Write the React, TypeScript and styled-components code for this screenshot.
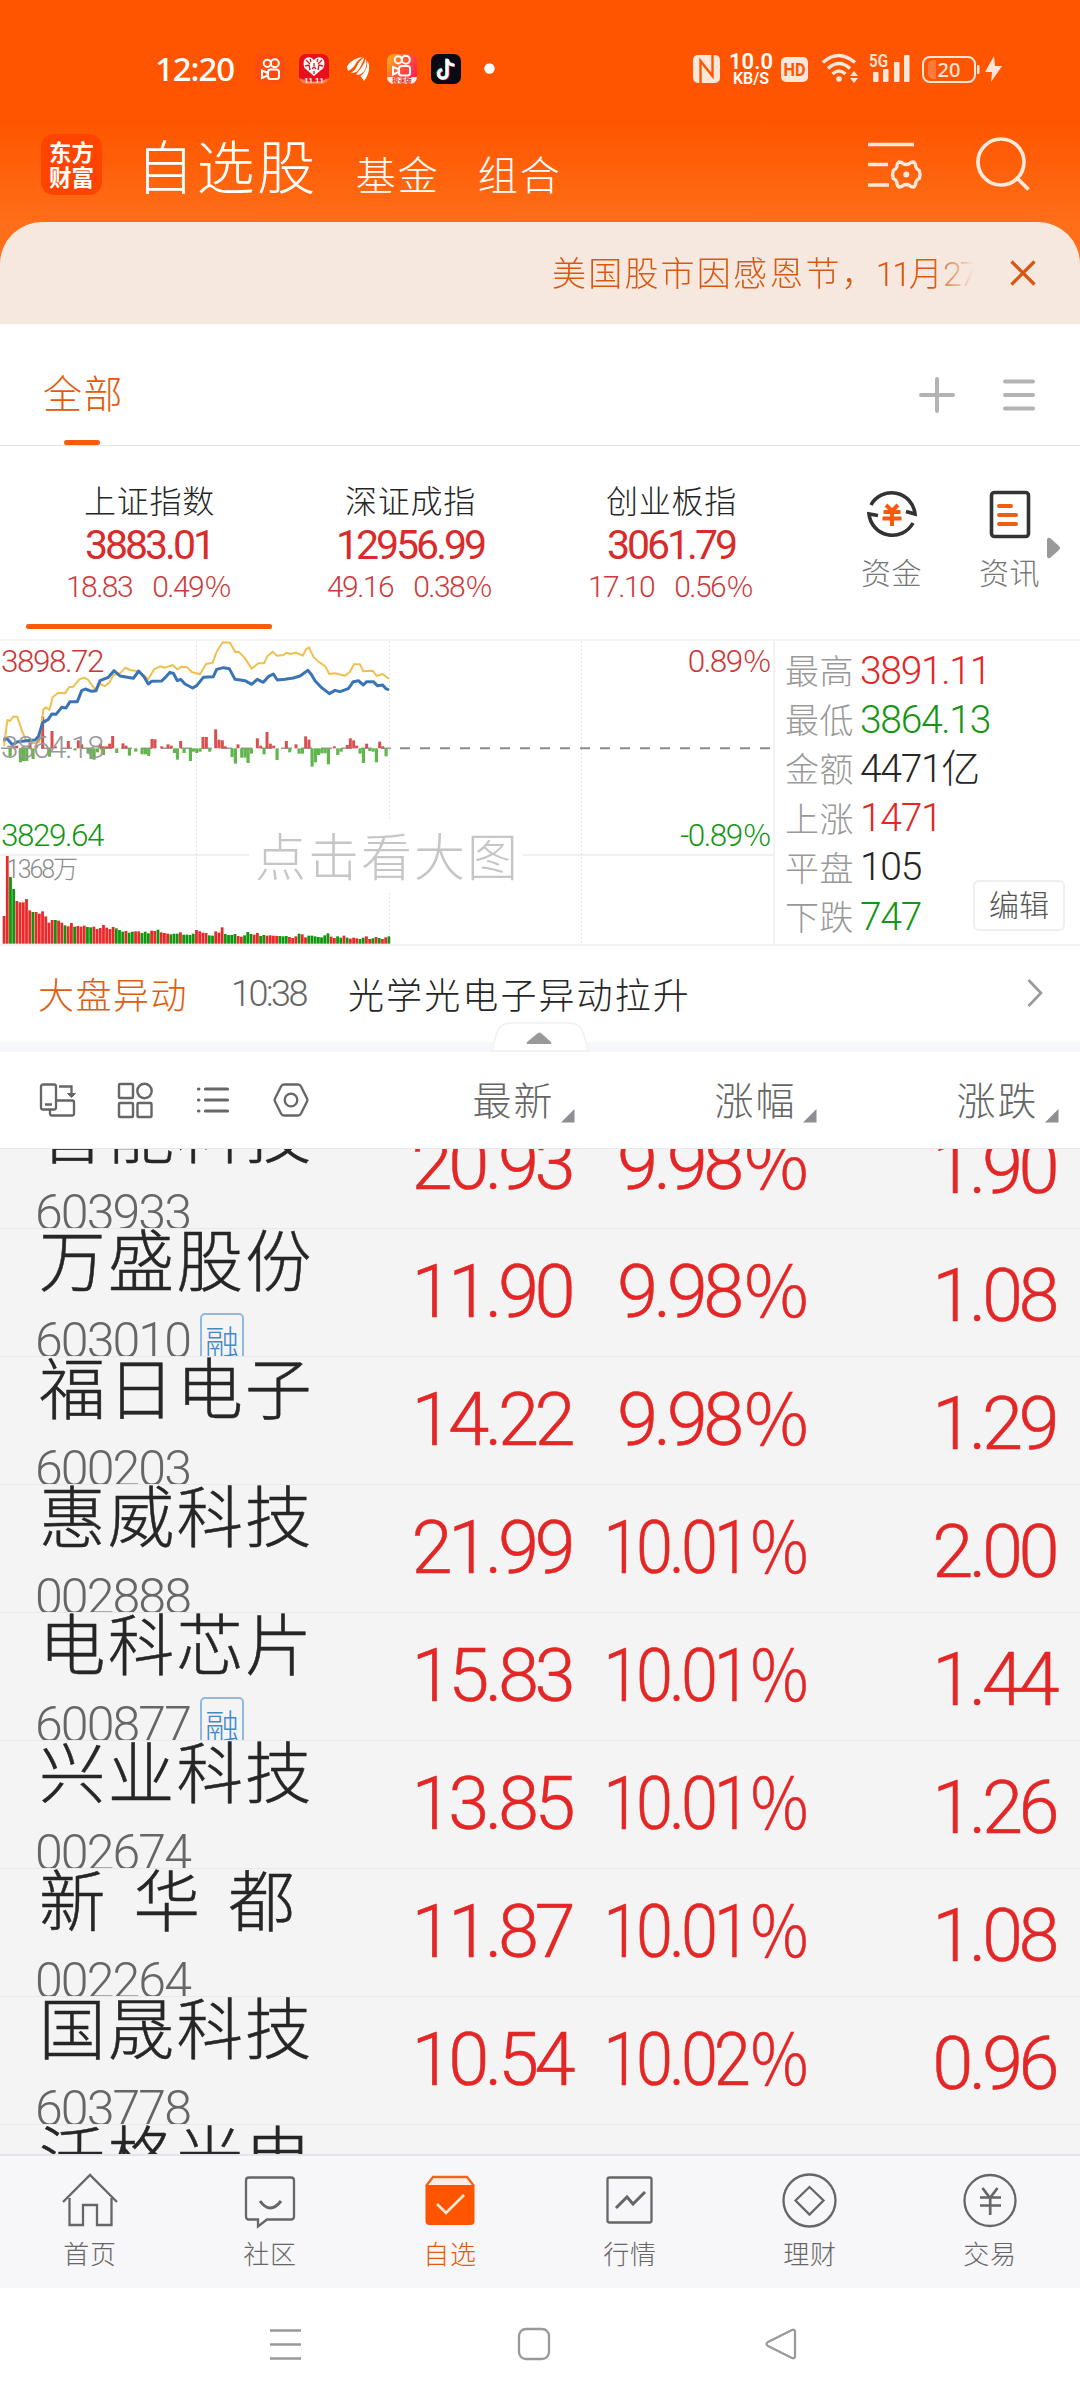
import React from "react";
import styled, { createGlobalStyle, css } from "styled-components";

const RED = "#e32626";
const GREEN = "#159515";
const INK = "#262626";

const GlobalStyle = createGlobalStyle`
  * { box-sizing: border-box; }
  html, body { margin: 0; padding: 0; background: #fff; }
  body { width: 1080px; height: 2400px; overflow: hidden; }
`;

const Screen = styled.div`
  width: 1080px;
  height: 2400px;
  display: flex;
  flex-direction: column;
  overflow: hidden;
  background: #fff;
  font-family: Roboto, "Noto Sans CJK SC", sans-serif;
  font-weight: 300;
  color: ${INK};
  white-space: nowrap;
  svg { display: block; flex: none; overflow: visible; }
`;

/* ---------- top area ---------- */

const Top = styled.header`
  height: 324px;
  flex: none;
  display: flex;
  flex-direction: column;
  background: linear-gradient(180deg, #ff5500 0, #ff5500 122px, #ff6e18 222px, #ff6e18 100%);
`;

const StatusBar = styled.div`
  height: 134px;
  padding: 52px 76px 48px 155px;
  display: flex;
  justify-content: space-between;
  color: #fff;
`;

const StatusGroup = styled.div`
  display: flex;
  align-items: center;
  height: 34px;
`;

const Clock = styled.span`
  width: 100px;
  font: 500 33px/34px "Noto Sans", sans-serif;
  letter-spacing: -1.1px;
`;

const AppBadge = styled.span<{ $bg: string }>`
  width: 30px;
  height: 30px;
  margin-right: 14px;
  border-radius: 7px;
  overflow: hidden;
  background: ${(p) => p.$bg};
`;

const Speed = styled.span`
  width: 40px;
  margin: 0 10px 0 10px;
  display: flex;
  flex-direction: column;
  align-items: center;
  font: 600 22px/18px Roboto, sans-serif;
  small { font: 600 16px/15px Roboto, sans-serif; }
`;

const TitleBar = styled.div`
  height: 88px;
  padding: 0 49px 0 41px;
  display: flex;
  align-items: flex-start;
  color: #fff;
`;

const Logo = styled.div`
  width: 61px;
  height: 61px;
  padding: 5px 0 0 8px;
  border-radius: 13px;
  background: #ff4400;
  font: 700 22.5px/25px "Noto Sans CJK SC", sans-serif;
`;

const HeadTab = styled.span<{ $size: number; $gap: number; $ml: number; $spacing: number }>`
  margin: ${(p) => p.$gap}px 0 0 ${(p) => p.$ml}px;
  font-size: ${(p) => p.$size}px;
  line-height: 60px;
  letter-spacing: ${(p) => p.$spacing}px;
`;

const HeadIcons = styled.div`
  margin: 6px 0 0 auto;
  display: flex;
  gap: 53px;
`;

const Notice = styled.div`
  height: 102px;
  padding: 0 44px 0 552px;
  display: flex;
  align-items: center;
  justify-content: space-between;
  border-radius: 42px 42px 0 0;
  background: #f6e7df;
`;

const NoticeText = styled.div`
  width: 424px;
  padding-top: 2px;
  overflow: hidden;
  font-size: 34px;
  line-height: 60px;
  letter-spacing: 2.2px;
  color: #d9580f;
  mask-image: linear-gradient(90deg, #000 380px, transparent 422px);
`;

const NoticeNumber = styled.span`
  letter-spacing: -2.4px;
  margin-left: -2px;
`;

/* ---------- group tabs ---------- */

const GroupBar = styled.div`
  height: 122px;
  flex: none;
  padding: 0 43px 0 43px;
  display: flex;
  align-items: stretch;
  justify-content: space-between;
  border-bottom: 1px solid #e3e3e3;
`;

const GroupTab = styled.div`
  display: flex;
  flex-direction: column;
  align-items: center;
  justify-content: flex-end;
  font-size: 39px;
  line-height: 60px;
  letter-spacing: 1.5px;
  color: #e55a0a;
  &::after {
    content: "";
    width: 36px;
    height: 5px;
    margin: 15px 3px 0 0;
    border-radius: 3px;
    background: #fb5a0c;
  }
`;

const GroupTools = styled.div`
  display: flex;
  align-items: center;
  gap: 46px;
  padding-top: 20px;
`;

/* ---------- indices ---------- */

const IndexBar = styled.section`
  height: 195px;
  flex: none;
  padding-left: 19px;
  display: flex;
  border-bottom: 2px solid #f4f4f4;
`;

const IndexCell = styled.div<{ $active?: boolean }>`
  width: 261px;
  padding-top: 36px;
  display: flex;
  flex-direction: column;
  align-items: center;
  &::after {
    content: "";
    width: 246px;
    height: 5px;
    margin: 19px 2px 0 0;
    align-self: center;
    border-radius: 3px;
    background: ${(p) => (p.$active ? "#fb5a0c" : "transparent")};
  }
`;

const IndexName = styled.div`
  font-size: 32px;
  line-height: 40px;
  letter-spacing: 0.8px;
`;

const IndexValue = styled.div`
  margin-right: 1px;
  font-size: 41px;
  font-weight: 400;
  line-height: 46px;
  letter-spacing: -3px;
  color: #da2b2b;
`;

const IndexDelta = styled.div`
  margin-right: 2px;
  display: flex;
  gap: 20px;
  font-size: 30px;
  line-height: 37px;
  letter-spacing: -1.5px;
  color: #cc3b3b;
`;

/* The percent sign is drawn wider than the tightly set digits beside it. */
const Percent = styled.span`
  margin-left: 0.06em;
  font-family: "Noto Sans CJK SC", sans-serif;
  font-size: 0.97em;
  line-height: 0;
  letter-spacing: 0;
`;

const Shortcuts = styled.div`
  margin-left: 59px;
  padding-top: 41px;
  display: flex;
  gap: 57px;
`;

const Shortcut = styled.div`
  width: 61px;
  display: flex;
  flex-direction: column;
  align-items: center;
  font-size: 30px;
  line-height: 40px;
  letter-spacing: 0.6px;
  color: #777;
  svg { margin-bottom: 13px; }
`;

const MoreArrow = styled.div`
  margin: 91px 0 0 7px;
`;

/* ---------- chart ---------- */

const Market = styled.section`
  position: relative;
  height: 305px;
  flex: none;
  display: flex;
  border-bottom: 2px solid #f2f2f2;
`;

const ChartBox = styled.div`
  position: relative;
  width: 775px;
  border-right: 2px solid #f2f2f2;
`;

const ChartLabel = styled.span<{ $top: number; $right?: boolean; $color: string }>`
  position: absolute;
  top: ${(p) => p.$top}px;
  ${(p) => (p.$right ? css`right: 2px;` : css`left: 1px;`)}
  font-size: 31.5px;
  line-height: 34px;
  letter-spacing: -1.5px;
  color: ${(p) => p.$color};
`;

const VolumeLabel = styled.span`
  position: absolute;
  left: 6px;
  top: 212px;
  font-size: 25px;
  line-height: 34px;
  letter-spacing: -2.1px;
  color: #8c8c8c;
`;

const Watermark = styled.div`
  position: absolute;
  left: 249px;
  top: 180px;
  width: 274px;
  height: 70px;
  padding-left: 6px;
  background: #fff;
  font-size: 51px;
  line-height: 76px;
  letter-spacing: 2px;
  color: #c6c6c6;
`;

const StatList = styled.div`
  flex: 1;
  padding: 5px 0 0 10px;
`;

const Stat = styled.div<{ $color: string }>`
  height: 49.2px;
  display: flex;
  align-items: center;
  gap: 6px;
  font-size: 34px;
  letter-spacing: 0.5px;
  color: #999;
  span { padding-bottom: 2px; }
  b {
    font-weight: 300;
    font-size: 39px;
    line-height: 46px;
    letter-spacing: -1.3px;
    color: ${(p) => p.$color};
  }
`;

const EditButton = styled.button`
  position: absolute;
  left: 973px;
  top: 239px;
  width: 92px;
  height: 51px;
  padding: 0;
  border: 2px solid #efefef;
  border-radius: 6px;
  background: #fff;
  font: 300 30px/48px Roboto, "Noto Sans CJK SC", sans-serif;
  color: #555;
`;

/* ---------- news ---------- */

const NewsRow = styled.div`
  position: relative;
  height: 106px;
  flex: none;
  padding: 1px 37px 4px 38px;
  display: flex;
  align-items: center;
  border-bottom: 10px solid #f5f7fa;
`;

const NewsTag = styled.span`
  width: 193px;
  font-size: 36px;
  letter-spacing: 1.5px;
  color: #e05d10;
`;

const NewsTime = styled.span`
  width: 117px;
  padding-top: 2px;
  font-size: 36px;
  line-height: 40px;
  letter-spacing: -2.5px;
  color: #666;
`;

const NewsTitle = styled.span`
  flex: 1;
  font-size: 36px;
  letter-spacing: 2.1px;
`;

const Collapse = styled.div`
  position: absolute;
  left: 491px;
  top: 76px;
`;

/* ---------- table ---------- */

const TableHead = styled.div`
  height: 97px;
  flex: none;
  display: grid;
  grid-template-columns: 340px 234.5px 242px 242px;
  align-items: center;
  border-bottom: 1px solid #e8e8e8;
  background: #fff;
`;

const ViewIcons = styled.div`
  padding-left: 39px;
  display: flex;
  gap: 42px;
`;

const SortHead = styled.div`
  padding-top: 4px;
  display: flex;
  justify-content: flex-end;
  align-items: center;
  gap: 6px;
  font-size: 39px;
  line-height: 60px;
  letter-spacing: 2px;
  color: #666;
  svg { margin-top: 28px; }
`;

const TableBody = styled.main`
  height: 1005px;
  flex: none;
  overflow: hidden;
  background: #f4f4f4;
`;

const StockRow = styled.div`
  height: 128px;
  display: grid;
  grid-template-columns: 340px 231px 237.5px 246.5px;
  overflow: hidden;
  border-bottom: 1px solid #e9e9e9;
  &:first-child { margin-top: -48px; }
`;

const StockName = styled.div`
  height: 73px;
  padding-left: 39px;
  margin-top: -2px;
  font-size: 66.5px;
  line-height: 73px;
  letter-spacing: 2.2px;
  word-spacing: 7.5px;
  white-space: pre;
  -webkit-text-stroke: 0.5px currentColor;
`;

const CodeLine = styled.div`
  padding: 13px 0 0 35px;
  display: flex;
  font-size: 50px;
  line-height: 57px;
  letter-spacing: -1.9px;
  color: #666;
`;

const MarginTag = styled.span`
  width: 44px;
  height: 58px;
  margin: 0 0 0 10px;
  border: 2px solid #8fb8e2;
  border-radius: 5px;
  font-size: 34px;
  line-height: 56px;
  letter-spacing: 0;
  text-align: center;
  color: #4388cf;
`;

const Num = styled.div<{ $drop?: boolean; $narrow?: boolean }>`
  padding-top: ${(p) => (p.$drop ? 22 : 18)}px;
  font-size: 74px;
  line-height: 90px;
  letter-spacing: -4.5px;
  text-align: right;
  color: ${RED};
  -webkit-text-stroke: 0.5px currentColor;
  transform: scaleX(${(p) => (p.$narrow ? 0.9 : 1)});
  transform-origin: right;
`;

/* ---------- bottom ---------- */

const TabBar = styled.nav`
  height: 134px;
  flex: none;
  display: grid;
  grid-template-columns: repeat(6, 180px);
  border-top: 2px solid #e4e4e6;
  background: #f7f7fa;
`;

const Tab = styled.div<{ $active?: boolean }>`
  padding-top: 15px;
  display: flex;
  flex-direction: column;
  align-items: center;
  font-size: 26px;
  line-height: 36px;
  letter-spacing: 0.8px;
  color: ${(p) => (p.$active ? "#e55a0a" : "#666")};
  svg { margin-bottom: 6px; }
`;

const SystemNav = styled.div`
  height: 112px;
  padding: 0 282px 0 268px;
  display: flex;
  align-items: center;
  justify-content: space-between;
`;

/* ---------- data ---------- */

const indices = [
  { name: "上证指数", value: "3883.01", change: "18.83", pct: "0.49" },
  { name: "深证成指", value: "12956.99", change: "49.16", pct: "0.38" },
  { name: "创业板指", value: "3061.79", change: "17.10", pct: "0.56" },
];

const stats = [
  ["最高", "3891.11", RED],
  ["最低", "3864.13", GREEN],
  ["金额", "4471亿", INK],
  ["上涨", "1471", RED],
  ["平盘", "105", INK],
  ["下跌", "747", GREEN],
];

const stocks = [
  { name: "智能科技", code: "603933", price: "20.93", pct: "9.98", diff: "1.90" },
  { name: "万盛股份", code: "603010", price: "11.90", pct: "9.98", diff: "1.08", margin: true },
  { name: "福日电子", code: "600203", price: "14.22", pct: "9.98", diff: "1.29" },
  { name: "惠威科技", code: "002888", price: "21.99", pct: "10.01", diff: "2.00" },
  { name: "电科芯片", code: "600877", price: "15.83", pct: "10.01", diff: "1.44", margin: true },
  { name: "兴业科技", code: "002674", price: "13.85", pct: "10.01", diff: "1.26" },
  { name: "新 华 都", code: "002264", price: "11.87", pct: "10.01", diff: "1.08" },
  { name: "国晟科技", code: "603778", price: "10.54", pct: "10.02", diff: "0.96" },
  { name: "沃格光电" },
];

const averageLine =
  "12,378 22,300 30,303 40,290 52,290 65,330 78,362 100,370 118,365 130,268 138,262 148,270 158,232 175,218 195,220 207,202 220,200 238,178 253,173 265,180 285,208 300,192 315,198 328,188 340,165 360,160 376,143 390,150 405,152 415,155 430,165 445,178 462,148 480,139 495,143 518,135 532,148 545,140 562,142 575,156 600,163 618,132 638,128 650,95 668,67 690,68 706,97 716,95 735,115 755,146 775,130 792,130 803,107 818,95 830,107 850,105 860,98 870,102 888,98 908,107 918,88 927,82 940,110 955,125 975,138 988,162 1005,160 1035,167 1050,155 1062,133 1080,133 1090,154 1118,152 1130,168 1148,162 1167,177";

const indexLine =
  "10,357 22,357 38,375 50,366 80,362 105,360 115,350 128,308 145,298 155,282 168,283 185,262 198,264 210,245 232,245 245,212 256,207 275,214 288,212 300,182 325,172 342,152 360,168 400,175 416,153 432,170 445,192 455,184 485,183 495,173 510,157 520,160 532,182 542,178 555,192 578,204 590,197 610,172 640,170 650,148 670,143 688,146 705,178 735,182 755,193 772,178 790,187 805,170 820,162 832,180 855,178 880,174 900,168 924,151 935,165 945,182 965,203 988,221 1005,211 1020,215 1045,206 1060,185 1075,182 1090,195 1100,185 1120,185 1132,197 1148,195 1158,206 1167,210";

const volumes = [
  83, 263, 200, 164, 128, 124, 124, 134, 100, 95, 95, 90, 97, 82, 63, 71, 71, 69, 63, 55, 52, 62, 51, 53, 51, 54, 50, 49, 51, 44,
  47, 56, 48, 44, 50, 46, 41, 36, 38, 33, 36, 37, 37, 32, 36, 31, 39, 38, 42, 34, 32, 30, 28, 30, 30, 34, 27, 27, 26, 30,
  41, 37, 33, 32, 25, 24, 37, 33, 49, 29, 26, 26, 29, 23, 21, 25, 35, 29, 27, 32, 23, 26, 24, 25, 24, 23, 23, 22, 23, 20,
  17, 22, 30, 28, 19, 24, 24, 22, 20, 19, 25, 31, 21, 17, 22, 18, 24, 18, 15, 18, 16, 14, 18, 22, 14, 16, 20, 17, 14, 19, 22,
];
const volumeColors =
  "RRGGRRRRRGRRRRRRGRRGRRGRRRGGRRRRRRRGGGRGGRRGGGRRGRRRGGGRGGGGRRRRGGRRRGGGGRRGGGRRGGRRRRGGGRRRGRRGGGGGGGRRGGRGRRRGGRRGRGRRGG";

const buying = [
  [40, 6], [50, 8], [90, 20], [108, 8], [128, 95], [156, 52], [166, 6], [205, 22], [235, 24], [245, 12], [301, 14], [310, 6], [320, 6], [329, 14], [338, 37], [369, 15], [378, 8],
  [456, 28], [465, 27], [485, 6], [504, 12], [514, 8], [542, 22], [609, 34], [619, 34], [647, 57], [657, 26], [667, 24], [676, 6],
  [714, 12], [772, 30], [782, 8], [801, 49], [811, 14], [821, 8], [859, 22], [888, 12], [917, 36], [927, 26], [1003, 6],
  [1042, 10], [1051, 30], [1061, 24], [1070, 8], [1100, 14], [1139, 20], [1148, 6],
];
const selling = [
  [30, 25], [61, 42], [70, 38], [80, 38], [99, 32], [148, 25], [225, 6], [264, 16], [273, 32], [282, 34], [292, 12], [310, 20], [350, 14],
  [388, 22], [407, 10], [426, 18], [436, 18], [446, 23], [523, 14], [532, 34], [552, 14], [571, 38], [580, 10], [590, 14], [600, 10], [629, 10],
  [696, 26], [706, 46], [725, 28], [735, 28], [744, 44], [754, 16], [792, 18], [831, 35], [869, 12], [897, 16], [907, 16], [936, 55], [946, 42],
  [955, 20], [965, 15], [975, 15], [985, 48], [1013, 20], [1023, 10], [1080, 16], [1090, 44], [1109, 8], [1119, 10], [1129, 42], [1158, 24],
];

/* ---------- drawings ---------- */

const Camera = () => (
  <g fill="none" stroke="#fff" strokeWidth="2">
    <circle cx="12.300" cy="9.300" r="3.600" />
    <circle cx="19.800" cy="9.300" r="4" />
    <rect x="13" y="15.500" width="11" height="9.500" rx="2.500" />
    <path d="M7 16.500v7.500l5.500-2.300v-3z" />
  </g>
);

const StatusIcons = () => (
  <>
    <AppBadge $bg="#ff4d0d">
      <svg width="30" height="30"><Camera /></svg>
    </AppBadge>
    <AppBadge $bg="#e8101c">
      <svg width="30" height="30">
        <path d="M0 24q15 7 30 0v6h-30z" fill="#ff7a4a" />
        <path d="M15 22L5.500 14Q3 7 7 4q5-2 8 2 3-4 8-2 4 3 1.500 10z" fill="#fff" />
        <path d="M7 6l4 4M23 6l-4 4M6 12l4-1 1 5M24 12l-4-1-1 5M15 9v3M13 15l2-2 2 2M15 17v3M11 5l1 3M19 5l-1 3" stroke="#e8101c" strokeWidth="1.300" fill="none" />
        <text x="15" y="28.500" textAnchor="middle" fontFamily="Roboto" fontSize="7.500" fontWeight="700" fill="#fff">11.11</text>
      </svg>
    </AppBadge>
    <AppBadge $bg="transparent">
      <svg width="30" height="30" fill="#fff">
        <path d="M4 12.500Q9 4 20 3Q14.500 6 12.500 10T5 17z" />
        <path d="M21 3.200Q15.500 8 13.700 12.500T8 18.500q5 1.500 8.300-4Q19 10 20 7.500T21 3.200z" />
        <path d="M22.800 4.200Q22 9 18.500 13.500T13 20.500q5.500 1 8.500-4T22.800 4.200z" />
        <path d="M24.500 7Q24.500 13 22 17t-4.500 5l3.500 5q4.500-6 5-11.500T24.500 7z" />
      </svg>
    </AppBadge>
    <AppBadge $bg="linear-gradient(120deg,#ffad1f 5%,#ff5a35 45%,#ff1f57 90%)">
      <svg width="30" height="30">
        <g transform="translate(-1,-3.500)"><Camera /></g>
        <path d="M0 23h30v3q-2 4-5 4H5q-4 0-5-4z" fill="#ffece0" />
        <text x="15" y="29.300" textAnchor="middle" fontFamily="Noto Sans CJK SC" fontSize="6.500" fontWeight="700" fill="#e23a1c">极速版</text>
      </svg>
    </AppBadge>
    <AppBadge $bg="#0b0a14">
      <svg width="30" height="30" fill="none" strokeWidth="3">
        <path d="M15.500 4.500v15a4.300 4.300 0 1 1-5-4.200M15.500 5q1 5 7 5.500" stroke="#25f4ee" />
        <path d="M17 5.500v15a4.300 4.300 0 1 1-5-4.200M17 6q1 5 7 5.500" stroke="#fe2c55" />
        <path d="M16.200 5v15a4.300 4.300 0 1 1-5-4.200M16.200 5.500q1 5.500 7.300 5.800" stroke="#fff" />
      </svg>
    </AppBadge>
    <svg width="30" height="30"><circle cx="14.500" cy="14.500" r="5.200" fill="#fff" /></svg>
  </>
);

const StatusRight = () => (
  <StatusGroup>
    <svg width="28" height="30" viewBox="0 0 28 30">
      <rect x="0" y="1" width="27" height="28" rx="5" fill="#ffe6da" />
      <path d="M7.500 29V7l12 15V1" stroke="#ff5500" strokeWidth="2.400" fill="none" />
    </svg>
    <Speed>10.0<small>KB/S</small></Speed>
    <svg width="28" height="26" viewBox="0 0 28 26">
      <rect width="27" height="25" rx="5" y="1" fill="#ffe6da" />
      <text x="13.500" y="20" textAnchor="middle" fontFamily="Roboto" fontSize="18" fontWeight="700" fill="#ff5500" textLength="22" lengthAdjust="spacingAndGlyphs">HD</text>
    </svg>
    <svg width="40" height="34" viewBox="0 0 40 34" style={{ marginLeft: 12 }} fill="none" stroke="#ffe6da" strokeWidth="3.400">
      <path d="M2 10.500q15-14 32 0M7 16.500q11-10 22 0M11.500 22q6.500-6 13 0" />
      <circle cx="18" cy="27" r="2.800" fill="#ffe6da" stroke="none" />
      <path d="M29 24l4-5 4 5zM29 26l4 5 4-5z" fill="#ffe6da" stroke="none" />
    </svg>
    <svg width="42" height="34" viewBox="0 0 42 34" style={{ marginLeft: 8 }} fill="#ffe6da">
      <text x="0" y="15" fontFamily="Roboto" fontSize="18" fontWeight="600" textLength="19" lengthAdjust="spacingAndGlyphs">5G</text>
      <rect x="4" y="20" width="5.500" height="10" rx="1" />
      <rect x="14" y="17" width="5.500" height="13" rx="1" />
      <rect x="25" y="10" width="5.500" height="20" rx="1" />
      <rect x="35" y="3" width="5.500" height="27" rx="1" />
    </svg>
    <svg width="82" height="34" viewBox="0 0 82 34" style={{ marginLeft: 11 }}>
      <rect x="1" y="5" width="52" height="25" rx="7" fill="none" stroke="#ffe6da" strokeWidth="2" />
      <path d="M10 8h4v19h-4q-4-1-4-5v-9q0-4 4-5z" fill="#ff7a3d" />
      <rect x="55" y="13" width="2.500" height="9" rx="1" fill="#ffe6da" />
      <text x="27" y="25" textAnchor="middle" fontFamily="Noto Sans" fontSize="20" fontWeight="500" fill="#ffe6da">20</text>
      <path d="M72 4L63 20h7l-1 10 11-16h-7z" fill="#ffe6da" />
    </svg>
  </StatusGroup>
);

/* Six rounded lobes around the origin, used by the list-settings icon. */
const gearPath = "M-7.500-12.500Q-4-12.500-3.500-11Q0-9 3.500-11Q4-12.500 7.500-12.500Q9.500-11 9.500-7.500Q10.500-5 13-4Q14.500 0 13 4Q10.500 5 9.500 7.500Q9.500 11 7.500 12.500Q4 12.500 3.500 11Q0 9-3.500 11Q-4 12.500-7.500 12.500Q-9.500 11-9.500 7.500Q-10.500 5-13 4Q-14.500 0-13-4Q-10.500-5-9.500-7.500Q-9.500-11-7.500-12.500z";

const Chart = () => (
  <svg width="773" height="303" viewBox="0 21 773 303">
    <g stroke="#f0f0f0" strokeWidth="1.500">
      <line x1="0" x2="773" y1="235" y2="235" strokeWidth="2" />
      {[196.5, 389.5, 581.5].map((x) => (
        <line key={x} x1={x} x2={x} y1="21" y2="324" strokeDasharray="2 2" stroke="#e6e6e6" strokeWidth="1" />
      ))}
    </g>
    <line x1="1" x2="391" y1="128.300" y2="128.300" stroke="#999" strokeWidth="1.500" strokeDasharray="11 9" />
    <line x1="400" x2="771" y1="128.300" y2="128.300" stroke="#8a8a8a" strokeWidth="2" strokeDasharray="10 10" />
    <g transform="scale(.33333)">
      {volumes.map((h, i) => (
        <rect key={i} x={8 + i * 9.62} y={971 - h} width="8.400" height={h} fill={volumeColors[i] === "R" ? "#ea2a2a" : "#0e970e"} />
      ))}
      {buying.map(([x, h]) => (
        <rect key={x} x={x - 4.5} y={385 - h} width="9" height={h} fill="#d94f4f" />
      ))}
      {selling.map(([x, h]) => (
        <rect key={x} x={x - 4.5} y="385" width="9.500" height={h} fill="#62b54c" />
      ))}
      <polyline points={averageLine} fill="none" stroke="#efc04f" strokeWidth="6" strokeLinejoin="round" />
      <polyline points={indexLine} fill="none" stroke="#3b74b5" strokeWidth="9" strokeLinejoin="round" />
    </g>
  </svg>
);

const SortMark = () => (
  <svg width="14" height="14"><path d="M13.500 0v13.500H0z" fill="#8e8e93" /></svg>
);

const tabs = [
  {
    name: "首页",
    icon: (
      <g>
        <path d="M3 31L30 4l27 27M9.500 27v27H23V34h14v20h14.500V27" />
      </g>
    ),
  },
  {
    name: "社区",
    icon: (
      <g>
        <path d="M9 6.500h42q3 0 3 3v36q0 3-3 3H27l-9 7v-7H9q-3 0-3-3v-36q0-3 3-3z" />
        <path d="M20 30q10 14 21 0" strokeWidth="3" />
      </g>
    ),
  },
  {
    name: "自选",
    icon: (
      <g>
        <path d="M6 15l7-9h34l7 9" fill="#fdeee5" stroke="#ee6420" />
        <path d="M5.500 14h49v36q0 4-4 4h-41q-4 0-4-4z" fill="#ff5500" stroke="none" />
        <path d="M17 33l9 9 18-18" stroke="#ffeada" strokeWidth="2.600" />
      </g>
    ),
  },
  {
    name: "行情",
    icon: (
      <g>
        <rect x="7.500" y="6.500" width="44" height="45" rx="2" />
        <path d="M16 37l11-11 6 7 12-12" strokeWidth="3" />
      </g>
    ),
  },
  {
    name: "理财",
    icon: (
      <g>
        <circle cx="29.500" cy="29.500" r="26" />
        <path d="M29.500 16l14 13.500-14 14-14-14z" />
      </g>
    ),
  },
  {
    name: "交易",
    icon: (
      <g>
        <circle cx="30" cy="29.500" r="25.500" />
        <path d="M22.500 17l7.500 10 7.500-10M20 26.500h21M20 34.500h21M30.200 26v18" strokeWidth="2.700" />
      </g>
    ),
  },
];

export default function App() {
  return (
    <Screen>
      <GlobalStyle />
      <Top>
        <StatusBar>
          <StatusGroup>
            <Clock>12:20</Clock>
            <StatusIcons />
          </StatusGroup>
          <StatusRight />
        </StatusBar>
        <TitleBar>
          <Logo>东方<br />财富</Logo>
          <HeadTab $size={58} $gap={5} $ml={34} $spacing={2.6}>自选股</HeadTab>
          <HeadTab $size={40} $gap={13} $ml={38} $spacing={2}>基金</HeadTab>
          <HeadTab $size={40} $gap={13} $ml={38} $spacing={2}>组合</HeadTab>
          <HeadIcons>
            <svg width="56" height="56" fill="none" stroke="#ffe9dc" strokeWidth="3.700">
              <path d="M2 4.500h46M2 24.500h20M2 45h21" />
              <path d={gearPath} transform="translate(40.300,34.500)" strokeWidth="3.300" />
              <circle cx="40.300" cy="34.500" r="3" fill="#ffe9dc" stroke="none" />
            </svg>
            <svg width="56" height="56" fill="none" stroke="#ffe9dc" strokeWidth="3.700">
              <circle cx="26" cy="22" r="23" />
              <path d="M42 38l11.500 11.500" />
            </svg>
          </HeadIcons>
        </TitleBar>
        <Notice>
          <NoticeText>
            美国股市因感恩节，<NoticeNumber>11</NoticeNumber>月<NoticeNumber>27</NoticeNumber>日
          </NoticeText>
          <svg width="26" height="26"><path d="M1.500 1.500l23 23M24.500 1.500l-23 23" stroke="#d8560f" strokeWidth="3.300" /></svg>
        </Notice>
      </Top>

      <GroupBar>
        <GroupTab>全部</GroupTab>
        <GroupTools>
          <svg width="36" height="36"><path d="M18 2v32M2 18h32" stroke="#b3b3b3" strokeWidth="4" strokeLinecap="round" /></svg>
          <svg width="36" height="36"><path d="M4 4.500h28M4 18h28M4 31.500h28" stroke="#b3b3b3" strokeWidth="4" strokeLinecap="round" /></svg>
        </GroupTools>
      </GroupBar>

      <IndexBar>
        {indices.map((it, i) => (
          <IndexCell key={it.name} $active={i === 0}>
            <IndexName>{it.name}</IndexName>
            <IndexValue>{it.value}</IndexValue>
            <IndexDelta>
              <span>{it.change}</span>
              <span>{it.pct}<Percent>%</Percent></span>
            </IndexDelta>
          </IndexCell>
        ))}
        <Shortcuts>
          <Shortcut>
            <svg width="54" height="54" fill="none" stroke="#333" strokeWidth="3.600">
              <path d="M6 18A23.500 23.500 0 0 1 50 27l-9-2.500M48 36A23.500 23.500 0 0 1 4 27l9 1.500" />
              <path d="M21 18l6 6 6-6M18.500 25h17M17.500 31.500h19M27 24v15" stroke="#fb5a0c" strokeWidth="4" />
            </svg>
            资金
          </Shortcut>
          <Shortcut>
            <svg width="54" height="54" fill="none" stroke="#333" strokeWidth="3.600">
              <rect x="8.500" y="5.500" width="37" height="44" rx="3" />
              <path d="M16 19h12M16 28h17M16 37h17" stroke="#ee5f10" strokeWidth="4" strokeLinecap="round" />
            </svg>
            资讯
          </Shortcut>
        </Shortcuts>
        <MoreArrow>
          <svg width="14" height="22"><path d="M0 3q0-3 3-2l9 8q2 2 0 4l-9 8q-3 1-3-2z" fill="#999" /></svg>
        </MoreArrow>
      </IndexBar>

      <Market>
        <ChartBox>
          <Chart />
          <ChartLabel $top={4} $color="#cf3434">3898.72</ChartLabel>
          <ChartLabel $top={90} $color="#999">3864.18</ChartLabel>
          <ChartLabel $top={178} $color={GREEN}>3829.64</ChartLabel>
          <ChartLabel $top={4} $right $color="#cf3434">0.89<Percent>%</Percent></ChartLabel>
          <ChartLabel $top={178} $right $color={GREEN}>-0.89<Percent>%</Percent></ChartLabel>
          <VolumeLabel>1368万</VolumeLabel>
          <Watermark>点击看大图</Watermark>
        </ChartBox>
        <StatList>
          {stats.map(([label, value, color]) => (
            <Stat key={label} $color={color}>
              <span>{label}</span>
              <b>{value}</b>
            </Stat>
          ))}
        </StatList>
        <EditButton>编辑</EditButton>
      </Market>

      <NewsRow>
        <NewsTag>大盘异动</NewsTag>
        <NewsTime>10:38</NewsTime>
        <NewsTitle>光学光电子异动拉升</NewsTitle>
        <svg width="16" height="30" fill="none" stroke="#999" strokeWidth="2.600"><path d="M1.500 2l12.500 13L1.500 28" /></svg>
        <Collapse>
          <svg width="98" height="30">
            <path d="M1 29L5 13Q8 1 20 1h58q12 0 15 12l4 16z" fill="#fff" stroke="#f0f0f0" strokeWidth="1.500" />
            <path d="M36 20L47 11q1.500-1 3 0l10 9q1 2-1 2H37q-2 0-1-2z" fill="#999" />
          </svg>
        </Collapse>
      </NewsRow>

      <TableHead>
        <ViewIcons>
          <svg width="36" height="36" fill="none" stroke="#666" strokeWidth="2.300">
            <rect x="2" y="2.500" width="15" height="25" rx="2" />
            <path d="M6 22.500h7M20 4.500h12.500V14" />
            <path d="M28.500 11.500l4 4 4-4z" fill="#666" strokeWidth="1" />
            <path d="M17 18.500h16q2 0 2 2v11q0 2-2 2H13q-2 0-2-2v-4" />
          </svg>
          <svg width="36" height="36" fill="none" stroke="#666" strokeWidth="2.400">
            <rect x="2" y="2" width="14" height="14" rx="1" />
            <circle cx="27.500" cy="9" r="7.200" />
            <rect x="2" y="21" width="14" height="14" rx="1" />
            <rect x="20.500" y="21" width="14" height="14" rx="1" />
          </svg>
          <svg width="36" height="36" fill="none" stroke="#666" strokeWidth="3.200" strokeLinecap="round">
            <path d="M10.500 7h22M10.500 18h22M10.500 29h22M3.500 7h.4M3.500 18h.4M3.500 29h.4" />
          </svg>
          <svg width="36" height="36" fill="none" stroke="#666" strokeWidth="2.300" strokeLinejoin="round">
            <path d="M11 2.500h14q2 0 3 2l6 12q1 1.500 0 3l-6 12q-1 2-3 2H11q-2 0-3-2l-6-12q-1-1.500 0-3l6-12q1-2 3-2z" />
            <circle cx="18" cy="18" r="6.300" />
          </svg>
        </ViewIcons>
        <SortHead>最新<SortMark /></SortHead>
        <SortHead>涨幅<SortMark /></SortHead>
        <SortHead>涨跌<SortMark /></SortHead>
      </TableHead>

      <TableBody>
        {stocks.map((s) => (
          <StockRow key={s.name}>
            <div>
              <StockName>{s.name}</StockName>
              {s.code && (
                <CodeLine>
                  {s.code}
                  {s.margin && <MarginTag>融</MarginTag>}
                </CodeLine>
              )}
            </div>
            {s.pct && (
              <>
                <Num>{s.price}</Num>
                <Num $narrow={s.pct.length > 4}>{s.pct}<Percent>%</Percent></Num>
                <Num $drop>{s.diff}</Num>
              </>
            )}
          </StockRow>
        ))}
      </TableBody>

      <TabBar>
        {tabs.map((t) => (
          <Tab key={t.name} $active={t.name === "自选"}>
            <svg width="60" height="60" fill="none" stroke="#666" strokeWidth="2.300">{t.icon}</svg>
            {t.name}
          </Tab>
        ))}
      </TabBar>

      <SystemNav>
        <svg width="34" height="34" stroke="#999" strokeWidth="2.600"><path d="M2 3.500h31M2 17.500h31M2 31.500h31" /></svg>
        <svg width="34" height="34" fill="none" stroke="#999" strokeWidth="2.300"><rect x="3" y="2" width="30" height="30" rx="7" /></svg>
        <svg width="34" height="34" fill="none" stroke="#999" strokeWidth="2.300"><path d="M4 15L28 3q3-1 3 2v24q0 3-3 2L4 19q-3-2 0-4z" /></svg>
      </SystemNav>
    </Screen>
  );
}
